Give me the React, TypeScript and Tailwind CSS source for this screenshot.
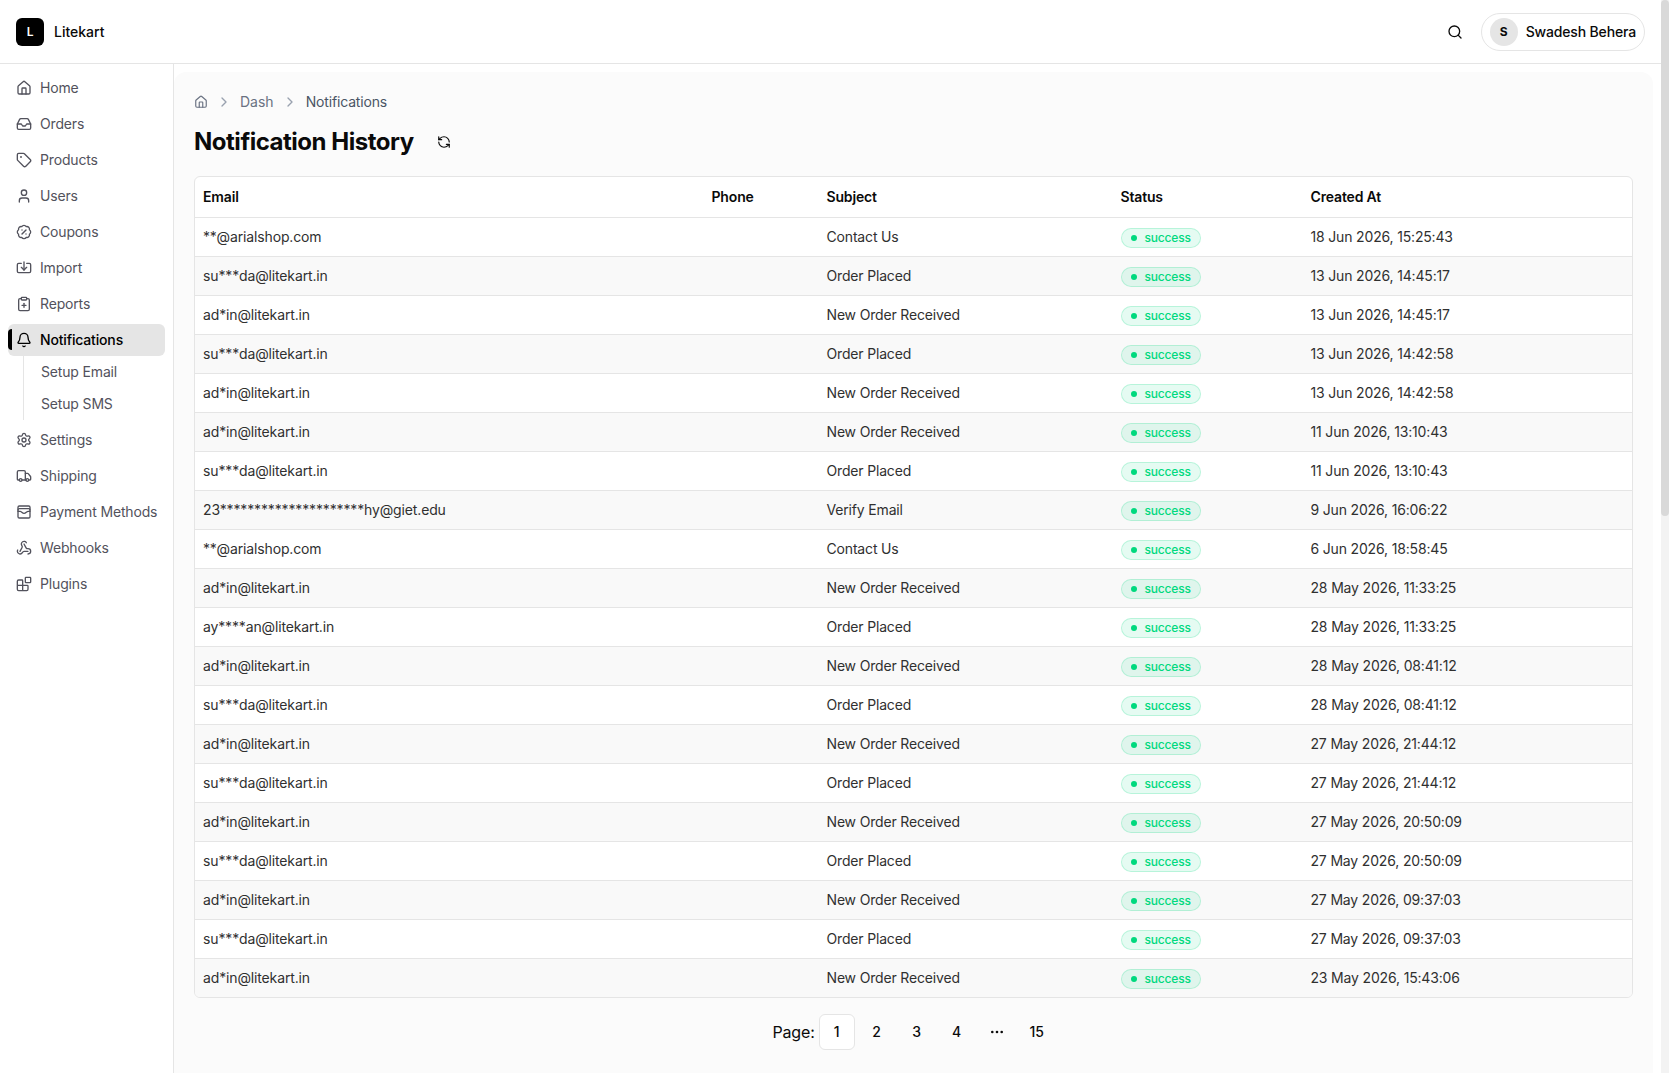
import { useState } from 'react';
import {
  BadgePercent,
  Bell,
  Blocks,
  ChevronRight,
  ClipboardPlus,
  House,
  Inbox,
  RefreshCcw,
  Search,
  Settings,
  Tag,
  Truck,
  User,
  Webhook,
} from 'lucide-react';
import clsx from 'clsx';

interface IconProps {
  className?: string;
}

const ImportIcon: React.FC<IconProps> = ({ className }) => (
  <svg className={className} viewBox="0 0 24 24" fill="none" stroke="currentColor" strokeWidth="2" strokeLinecap="round" strokeLinejoin="round">
    <path d="M12 3v12" />
    <path d="m8 11 4 4 4-4" />
    <path d="M8 5H4a2 2 0 0 0-2 2v10a2 2 0 0 0 2 2h16a2 2 0 0 0 2-2V7a2 2 0 0 0-2-2h-4" />
  </svg>
);

const PaymentIcon: React.FC<IconProps> = ({ className }) => (
  <svg className={className} viewBox="0 0 24 24" fill="none" stroke="currentColor" strokeWidth="2" strokeLinecap="round" strokeLinejoin="round">
    <rect width="18" height="18" x="3" y="3" rx="2" />
    <path d="M3 9a2 2 0 0 1 2-2h14a2 2 0 0 1 2 2" />
    <path d="M3 11h3c.8 0 1.6.3 2.1.9l1.1.9c1.6 1.6 4.1 1.6 5.7 0l1.1-.9c.5-.5 1.3-.9 2.1-.9H21" />
  </svg>
);

interface NavItem {
  label: string;
  icon: React.FC<IconProps>;
  children?: string[];
}

const navItems: NavItem[] = [
  { label: 'Home', icon: House },
  { label: 'Orders', icon: Inbox },
  { label: 'Products', icon: Tag },
  { label: 'Users', icon: User },
  { label: 'Coupons', icon: BadgePercent },
  { label: 'Import', icon: ImportIcon },
  { label: 'Reports', icon: ClipboardPlus },
  { label: 'Notifications', icon: Bell, children: ['Setup Email', 'Setup SMS'] },
  { label: 'Settings', icon: Settings },
  { label: 'Shipping', icon: Truck },
  { label: 'Payment Methods', icon: PaymentIcon },
  { label: 'Webhooks', icon: Webhook },
  { label: 'Plugins', icon: Blocks },
];

const notifications = [
  { email: '**@arialshop.com', subject: 'Contact Us', createdAt: '18 Jun 2026, 15:25:43' },
  { email: 'su***da@litekart.in', subject: 'Order Placed', createdAt: '13 Jun 2026, 14:45:17' },
  { email: 'ad*in@litekart.in', subject: 'New Order Received', createdAt: '13 Jun 2026, 14:45:17' },
  { email: 'su***da@litekart.in', subject: 'Order Placed', createdAt: '13 Jun 2026, 14:42:58' },
  { email: 'ad*in@litekart.in', subject: 'New Order Received', createdAt: '13 Jun 2026, 14:42:58' },
  { email: 'ad*in@litekart.in', subject: 'New Order Received', createdAt: '11 Jun 2026, 13:10:43' },
  { email: 'su***da@litekart.in', subject: 'Order Placed', createdAt: '11 Jun 2026, 13:10:43' },
  { email: '23*********************hy@giet.edu', subject: 'Verify Email', createdAt: '9 Jun 2026, 16:06:22' },
  { email: '**@arialshop.com', subject: 'Contact Us', createdAt: '6 Jun 2026, 18:58:45' },
  { email: 'ad*in@litekart.in', subject: 'New Order Received', createdAt: '28 May 2026, 11:33:25' },
  { email: 'ay****an@litekart.in', subject: 'Order Placed', createdAt: '28 May 2026, 11:33:25' },
  { email: 'ad*in@litekart.in', subject: 'New Order Received', createdAt: '28 May 2026, 08:41:12' },
  { email: 'su***da@litekart.in', subject: 'Order Placed', createdAt: '28 May 2026, 08:41:12' },
  { email: 'ad*in@litekart.in', subject: 'New Order Received', createdAt: '27 May 2026, 21:44:12' },
  { email: 'su***da@litekart.in', subject: 'Order Placed', createdAt: '27 May 2026, 21:44:12' },
  { email: 'ad*in@litekart.in', subject: 'New Order Received', createdAt: '27 May 2026, 20:50:09' },
  { email: 'su***da@litekart.in', subject: 'Order Placed', createdAt: '27 May 2026, 20:50:09' },
  { email: 'ad*in@litekart.in', subject: 'New Order Received', createdAt: '27 May 2026, 09:37:03' },
  { email: 'su***da@litekart.in', subject: 'Order Placed', createdAt: '27 May 2026, 09:37:03' },
  { email: 'ad*in@litekart.in', subject: 'New Order Received', createdAt: '23 May 2026, 15:43:06' },
];

const pages = ['1', '2', '3', '4', '...', '15'];

const Header = () => (
  <header className="flex h-16 shrink-0 items-center justify-between border-b border-neutral-200 bg-white px-4">
    <div className="flex items-center gap-2.5">
      <div className="flex size-7 items-center justify-center rounded-md bg-black text-xs font-semibold text-white">L</div>
      <span className="text-sm font-medium tracking-normal text-neutral-950">Litekart</span>
    </div>
    <div className="flex items-center gap-[18px]">
      <button aria-label="Search">
        <Search className="size-4 text-neutral-950" />
      </button>
      <button className="flex h-[38px] items-center gap-2 rounded-full border border-neutral-200 px-2">
        <span className="flex size-7 items-center justify-center rounded-full bg-neutral-200 text-xs font-bold text-neutral-950">S</span>
        <span className="text-sm font-medium text-neutral-950">Swadesh Behera</span>
      </button>
    </div>
  </header>
);

const Sidebar = () => {
  const [active, setActive] = useState('Notifications');

  return (
    <nav className="flex w-[174px] shrink-0 flex-col gap-1 border-r border-neutral-200 bg-white p-2">
      {navItems.map(({ label, icon: Icon, children }) => (
        <div key={label}>
          <button
            onClick={() => setActive(label)}
            className={clsx(
              'relative flex h-8 w-full items-center gap-2 rounded-md pl-2 text-sm whitespace-nowrap',
              active === label ? 'bg-neutral-200 font-medium text-black' : 'text-zinc-600'
            )}
          >
            {active === label && <span className="absolute top-[5px] left-0 h-[21px] w-1 rounded-l-md bg-black" />}
            <Icon className="size-4 shrink-0" />
            {label}
          </button>
          {children && (
            <div className="ml-[15px] border-l border-neutral-200 pl-[17px]">
              {children.map((child) => (
                <a key={child} className="flex h-8 items-center text-sm text-zinc-600">
                  {child}
                </a>
              ))}
            </div>
          )}
        </div>
      ))}
    </nav>
  );
};

const StatusBadge = () => (
  <span className="flex h-5 w-20 items-center gap-2 rounded-full border border-[#00d97e]/20 bg-[#00d97e]/10 pl-[9px] text-xs font-medium text-[#00d97e]">
    <span className="size-1.5 rounded-full bg-[#00d97e]" />
    success
  </span>
);

const NotificationTable = () => (
  <div className="mt-4 overflow-hidden rounded-md border border-neutral-200 bg-white">
    <table className="w-full table-fixed text-left text-sm">
      <colgroup>
        <col className="w-[508.5px]" />
        <col className="w-[115px]" />
        <col className="w-[294px]" />
        <col className="w-[190px]" />
        <col />
      </colgroup>
      <thead>
        <tr className="h-10 border-b border-neutral-200 text-neutral-950">
          {['Email', 'Phone', 'Subject', 'Status', 'Created At'].map((column) => (
            <th key={column} className="px-2 py-0 font-semibold">
              {column}
            </th>
          ))}
        </tr>
      </thead>
      <tbody className="tracking-[-0.012em] text-[#303030]">
        {notifications.map((item, i) => (
          <tr key={i} className="h-[39px] border-b border-neutral-200 last:border-b-0 even:bg-[#f9f9f9]">
            <td className="px-2 py-0 tracking-[-0.01em]">{item.email}</td>
            <td />
            <td className="px-2 py-0">{item.subject}</td>
            <td className="px-2 pt-0.5 pb-0">
              <StatusBadge />
            </td>
            <td className="px-2 py-0">{item.createdAt}</td>
          </tr>
        ))}
      </tbody>
    </table>
  </div>
);

const Pagination = () => {
  const [page, setPage] = useState('1');

  return (
    <div className="mt-4 flex items-center justify-center text-neutral-950">
      <span className="mr-1">Page:</span>
      <div className="flex gap-1">
        {pages.map((p) => (
          <button
            key={p}
            onClick={() => setPage(p)}
            className={clsx(
              'flex size-9 items-center justify-center rounded-md text-sm font-medium',
              page === p && 'border border-neutral-200 bg-white'
            )}
          >
            {p === '...' ? (
              <svg className="size-4" viewBox="0 0 16 16" fill="currentColor">
                <circle cx="3.3" cy="8" r="1.3" />
                <circle cx="8" cy="8" r="1.3" />
                <circle cx="12.7" cy="8" r="1.3" />
              </svg>
            ) : (
              p
            )}
          </button>
        ))}
      </div>
    </div>
  );
};

export default function App() {
  return (
    <div className="flex h-[1073px] w-full overflow-hidden bg-white font-['Inter',sans-serif] tracking-[-0.01em]">
      <div className="flex min-w-0 flex-1 flex-col">
        <Header />
        <div className="flex min-h-0 flex-1">
          <Sidebar />
          <main className="mt-2 mr-2 min-w-0 flex-1 rounded-t-xl bg-[#fbfbfb] px-5 pt-5">
            {/* Breadcrumb */}
            <div className="flex h-5 items-center text-sm text-gray-500">
              <House className="size-3.5" />
              <ChevronRight className="mx-2 size-4 text-gray-400" />
              <span className="tracking-normal">Dash</span>
              <ChevronRight className="mx-2 size-4 text-gray-400" />
              <span className="text-gray-600">Notifications</span>
            </div>

            {/* Title */}
            <div className="mt-3 flex h-9 items-center gap-[23px]">
              <h1 className="text-2xl font-bold tracking-[-0.02em] text-neutral-950">Notification History</h1>
              <button aria-label="Refresh">
                <RefreshCcw className="size-3.5 text-neutral-950" />
              </button>
            </div>

            <NotificationTable />
            <Pagination />
          </main>
        </div>
      </div>

      {/* Scrollbar */}
      <div className="w-2 shrink-0 bg-[#f3f3f3]">
        <div className="h-[516px] rounded-full bg-[#d9d9d9]" />
      </div>
    </div>
  );
}
